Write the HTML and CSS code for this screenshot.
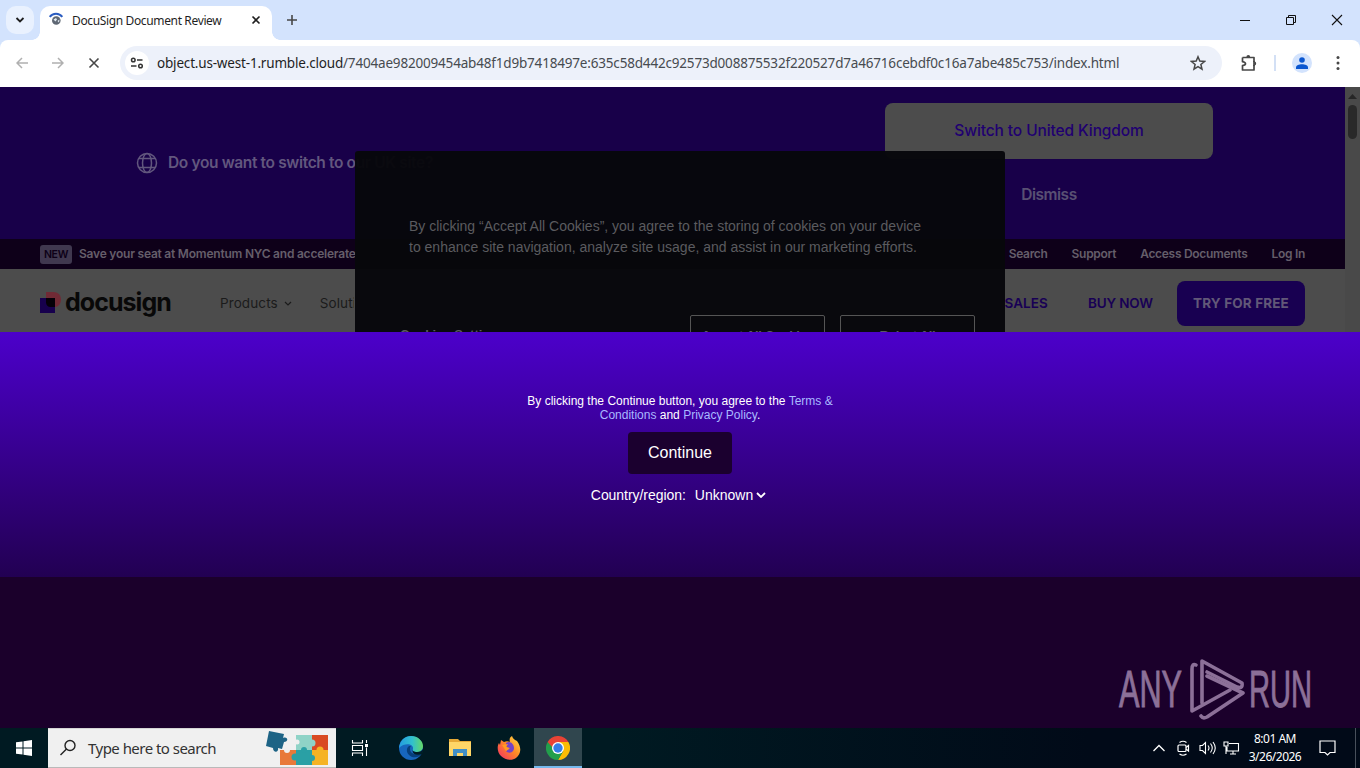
FILE: index.html
```html
<!DOCTYPE html>
<html lang="en">
<head>
  <meta charset="UTF-8">
  <meta name="viewport" content="width=device-width, initial-scale=1.0">
  <title>DocuSign Document Review</title>
  <link rel="stylesheet" href="styles.css">
</head>
<body>
  <!-- Tab strip -->
  <div class="tab-strip">
    <button class="tab-search"><svg width="10" height="10" viewBox="0 0 10 10"><path d="M1.500 3 5 6.500 8.500 3" fill="none" stroke="#1f1f1f" stroke-width="1.800"/></svg></button>
    <div class="tab">
      <svg class="favicon" width="16" height="16" viewBox="0 0 16 16">
        <circle cx="8.300" cy="8.500" r="4.300" fill="#5f6874"/>
        <path d="M5.500 7.500 8 6l1 1.500-1.500 2zM9.500 9l2-1.500-.5 3z" fill="#e4ecf4"/>
        <path d="M1.700 4.800C4.800.6 11.200.6 14.300 4.800" fill="none" stroke="#2a5cc0" stroke-width="2"/>
      </svg>
      <span class="tab-title">DocuSign Document Review</span>
      <svg class="tab-close" width="10" height="10" viewBox="0 0 10 10"><path d="M1.500 1.500l7 7M8.500 1.500l-7 7" stroke="#1f1f1f" stroke-width="1.600"/></svg>
    </div>
    <svg class="new-tab" width="12" height="12" viewBox="0 0 12 12"><path d="M6 1v10M1 6h10" stroke="#474747" stroke-width="1.600"/></svg>
    <div class="window-buttons">
      <svg width="12" height="12" viewBox="0 0 12 12"><path d="M1 6.500h10" stroke="#111"/></svg>
      <svg width="12" height="12" viewBox="0 0 12 12"><path d="M1.500 3.500h7v7h-7zM3.500 3.500v-2h7v7h-2" fill="none" stroke="#111"/></svg>
      <svg width="12" height="12" viewBox="0 0 12 12"><path d="M1 1l10 10M11 1 1 11" stroke="#111" stroke-width="1.100"/></svg>
    </div>
  </div>

  <!-- Toolbar -->
  <div class="toolbar">
    <svg class="nav-icon" width="12" height="12" viewBox="0 0 12 12"><path d="M12 6H1.500M6 1 1 6l5 5" fill="none" stroke="#b0b0b0" stroke-width="1.500"/></svg>
    <svg class="nav-icon" width="12" height="12" viewBox="0 0 12 12"><path d="M0 6h10.500M6 1l5 5-5 5" fill="none" stroke="#b0b0b0" stroke-width="1.500"/></svg>
    <svg class="nav-icon" width="12" height="12" viewBox="0 0 12 12"><path d="M1.500 1.500l9 9M10.500 1.500l-9 9" stroke="#474747" stroke-width="1.600"/></svg>
    <div class="address-bar">
      <span class="site-info"><svg width="14" height="12" viewBox="0 0 14 12"><g fill="none" stroke="#333" stroke-width="1.500"><circle cx="3.300" cy="3" r="1.800"/><path d="M7 3h5.500M1 9h5.500"/><circle cx="10.500" cy="9" r="1.800"/></g></svg></span>
      <span class="url"><span class="host">object.us-west-1.rumble.cloud</span>/7404ae982009454ab48f1d9b7418497e:635c58d442c92573d008875532f220527d7a46716cebdf0c16a7abe485c753/index.html</span>
      <svg class="star" width="16" height="16" viewBox="0 0 16 16"><path d="M8 1.800l1.800 4.300 4.700.4-3.600 3 1.100 4.600L8 11.700l-4 2.400 1.100-4.600-3.600-3 4.700-.4z" fill="none" stroke="#474747" stroke-width="1.500"/></svg>
    </div>
    <svg class="puzzle" width="18" height="18" viewBox="0 0 18 18"><path d="M2.500 3.500h11.500v4.500M14 11v5H2.500v-4.300q3-.7 3-2t-3-2V3.500" fill="none" stroke="#474747" stroke-width="1.700" stroke-linejoin="round"/><path d="M6.400 3a1.900 1.900 0 0 1 3.800 0zM14.300 7.600a1.900 1.900 0 0 1 0 3.800z" fill="#474747"/><path d="M14 7v5" stroke="#474747" stroke-width="1.700"/></svg>
    <span class="divider"></span>
    <span class="avatar"><svg width="14" height="14" viewBox="0 0 14 14"><circle cx="7" cy="4" r="2.800" fill="#0b57d0"/><path d="M1 13v-1.500C1 9.500 4 8.300 7 8.300s6 1.200 6 3.200V13z" fill="#0b57d0"/></svg></span>
    <svg class="menu-dots" width="4" height="16" viewBox="0 0 4 16"><g fill="#474747"><circle cx="2" cy="2.500" r="1.500"/><circle cx="2" cy="8" r="1.500"/><circle cx="2" cy="13.500" r="1.500"/></g></svg>
  </div>

  <!-- Page -->
  <div class="page">
    <div class="site">
      <div class="site-content">
        <div class="region-banner">
          <div class="region-question">
            <svg width="22" height="22" viewBox="0 0 22 22"><g fill="none" stroke="#62577e" stroke-width="1.500"><circle cx="11" cy="11" r="9.500"/><ellipse cx="11" cy="11" rx="4.500" ry="9.500"/><path d="M3 6.500h16M3 15.500h16"/></g></svg>
            <span class="question">Do you want to switch to our UK site?</span>
          </div>
          <div class="region-actions">
            <button class="switch"><span>Switch to United Kingdom</span></button>
            <span class="dismiss">Dismiss</span>
          </div>
        </div>
        <div class="promo-bar">
          <span class="new-badge">NEW</span>
          <span class="promo">Save your seat at Momentum NYC and accelerate</span>
          <span class="link search-link">Search</span>
          <span class="link support-link">Support</span>
          <span class="link docs-link">Access Documents</span>
          <span class="link login-link">Log In</span>
        </div>
        <div class="main-nav">
          <svg class="logo-mark" width="22" height="22" viewBox="0 0 22 22"><path d="M6 0h7c5 0 8 3 8 7.500S18 15 15 15H6z" fill="#702a35"/><path d="M0 6h15v15H0z" fill="#17004d"/><path d="M6 6h9v9h-4.500C8 15 6 13 6 10.500z" fill="#050008"/></svg>
          <span class="logo-text">docusign</span>
          <span class="nav-item products">Products</span>
          <svg class="caret" width="8" height="6" viewBox="0 0 8 6"><path d="M1 1l3 3 3-3" fill="none" stroke="#1b1b1b" stroke-width="1.200"/></svg>
          <span class="nav-item solutions">Solutions</span>
          <span class="cta sales">SALES</span>
          <span class="cta buy">BUY NOW</span>
          <span class="try"><span>TRY FOR FREE</span></span>
        </div>
      </div>
      <div class="scrollbar">
        <svg width="9" height="5" viewBox="0 0 9 5"><path d="M0 5 4.500 0 9 5z" fill="#262626"/></svg>
        <span class="thumb"></span>
      </div>
      <!-- Cookie dialog over the site header -->
      <div class="cookie-dialog">
        <p><span class="line-one">By clicking “Accept All Cookies”, you agree to the storing of cookies on your device</span><br><span class="line-two">to enhance site navigation, analyze site usage, and assist in our marketing efforts.</span></p>
        <div class="cookie-buttons">
          <span class="settings">Cookies Settings</span>
          <span class="outline-button">Accept All Cookies</span>
          <span class="outline-button">Reject All</span>
        </div>
      </div>
    </div>

    <div class="consent">
      <p class="terms"><span class="terms-one">By clicking the Continue button, you agree to the <a>Terms &amp;</a></span><br><span class="terms-two"><a>Conditions</a> and <a>Privacy Policy</a>.</span></p>
      <button class="continue">Continue</button>
      <div class="country"><span class="country-label">Country/region:</span><span class="country-value">Unknown</span><svg width="10" height="6" viewBox="0 0 10 6"><path d="M1 1l4 4 4-4" fill="none" stroke="#fff" stroke-width="1.800"/></svg></div>
    </div>

    <!-- Watermark -->
    <svg class="watermark" width="194" height="64" viewBox="0 0 194 64">
      <g class="watermark-text">
        <text x="1" y="50" textLength="63" lengthAdjust="spacingAndGlyphs">ANY</text>
        <text x="131" y="50" textLength="63" lengthAdjust="spacingAndGlyphs">RUN</text>
      </g>
      <g fill="none" stroke="#8c7098" stroke-width="3.600" stroke-linejoin="round" stroke-linecap="round">
        <path d="M78 8q-4-2-4 4v42l38-21"/>
        <path d="M84 46V4l40 22q1 6-5 4L89 15"/>
        <path d="M83 59q2 3 6 1l36-24-36-17"/>
      </g>
    </svg>
  </div>

  <!-- Taskbar -->
  <div class="taskbar">
    <div class="start"><svg width="16" height="16" viewBox="0 0 16 16"><path d="M0 2.300 6.500 1.400v6.100H0zM7.500 1.200 16 0v7.500H7.500zM0 8.500h6.500v6.100L0 13.700zM7.500 8.500H16V16l-8.500-1.200z" fill="#fff"/></svg></div>
    <div class="search-box">
      <svg class="magnifier" width="18" height="18" viewBox="0 0 18 18"><g fill="none" stroke="#222" stroke-width="1.400"><circle cx="11" cy="6.500" r="5"/><path d="M7.500 10 1.500 16"/></g></svg>
      <span class="search-text">Type here to search</span>
      <svg class="puzzle-art" width="64" height="36" viewBox="0 0 64 36">
        <path d="M14 20h16v15H14z" fill="#e8793a"/>
        <path d="M30 5h16v15H30z" fill="#8fd3c7"/>
        <path d="M46 5h16v15H46z" fill="#d94a22"/>
        <path d="M30 20h16v15H30z" fill="#2aa0a5"/>
        <path d="M46 20h16v15H46z" fill="#f5b324"/>
        <circle cx="46" cy="13" r="3.500" fill="#8fd3c7"/><circle cx="29" cy="27" r="3.500" fill="#2aa0a5"/>
        <circle cx="54" cy="20" r="3.500" fill="#f5b324"/><circle cx="38" cy="20" r="3" fill="#2aa0a5"/><circle cx="46" cy="28" r="3" fill="#2aa0a5"/><circle cx="31" cy="12" r="2.500" fill="#efefef"/><circle cx="21" cy="20" r="3" fill="#efefef"/>
        <path d="M3 1l15 3-1 4c5-2 6 4 1 4l-2 7-4-1c1 5-5 5-5 0l-7-2z" fill="#1d6385"/>
      </svg>
    </div>
    <div class="app"><svg width="18" height="18" viewBox="0 0 18 18"><path d="M1.500 1v3h10V1M1.500 17v-3h10v3M1.500 6.500h10v5h-10zM15.500 1v3M15.500 8.500V17" fill="none" stroke="#fff" stroke-width="1.100"/><path d="M14 5h3v3h-3z" fill="#fff"/></svg></div>
    <div class="app wide"><svg width="24" height="24" viewBox="0 0 24 24">
      <defs><linearGradient id="edge" x1="0" x2="1"><stop offset="0" stop-color="#249be0"/><stop offset=".55" stop-color="#31c0ce"/><stop offset="1" stop-color="#65d867"/></linearGradient></defs>
      <circle cx="12" cy="12" r="12" fill="#1766bd"/>
      <path d="M0 12C1 4 6 0 12 0c7 0 12 5 12 10 0 4-3 6-6 6-3 0-5-1-4-3 1-5-8-7-14-1z" fill="url(#edge)"/>
      <path d="M10 10c-4 3-2 9 3 11 4 1 8 0 10-4-5 3-12 1-12-4 0-1 0-2 1-3z" fill="#073f7b"/>
      <path d="M14 13c-1 2 1 3 4 3 3 0 5-1 6-3 0 2 0 4-1 5-5 2-11 0-9-5z" fill="#001c26"/>
    </svg></div>
    <div class="app wide"><svg width="22" height="20" viewBox="0 0 22 20"><path d="M0 1h9l2 2h11v15H0z" fill="#e7a936"/><path d="M0 4h22v14H0z" fill="#ffd667"/><path d="M4 18v-7h14v7h-4v-3H8v3z" fill="#428fc5"/></svg></div>
    <div class="app wide"><svg width="24" height="24" viewBox="0 0 24 24">
      <defs><linearGradient id="fox" x1="1" y1="0" x2="0" y2="1"><stop offset="0" stop-color="#ffe34a"/><stop offset=".45" stop-color="#ff8b25"/><stop offset="1" stop-color="#f32968"/></linearGradient></defs>
      <path d="M4 4l3 2c2-1 4-1 6 0-1-3 0-5 2-6 1 3 3 4 5 5 5 7 4 13-1 17-4 3-11 2-15-2-4-4-4-10-2-13l1 2z" fill="url(#fox)"/>
      <path d="M9 7c4-3 8 1 8 5 0 5-6 6-8 3l3-2-3-3z" fill="#7543c5"/>
      <path d="M5 9l6-1-2 3 4 1-4 3z" fill="#ff9b20"/>
    </svg></div>
    <div class="app wide active"><svg width="24" height="24" viewBox="0 0 24 24"><path d="M12 6h10.400A12 12 0 0 1 12 24l5.200-9z" fill="#fbbc04"/><path d="M12 12l5.200 3L12 24A12 12 0 0 1 1.600 6z" fill="#229f4b"/><path d="M1.600 6A12 12 0 0 1 22.400 6H12l-5 6z" fill="#e94335"/><circle cx="12" cy="12" r="6" fill="#fff"/><circle cx="12" cy="12" r="4.700" fill="#347ee8"/></svg></div>
    <div class="tray">
      <svg width="12" height="8" viewBox="0 0 12 8"><path d="M.5 7 6 1.500 11.500 7" fill="none" stroke="#fff" stroke-width="1.300"/></svg>
      <svg class="meet" width="14" height="16" viewBox="0 0 14 16"><g fill="none" stroke="#fff" stroke-width="1.200"><rect x="1" y="5" width="8" height="6.500" rx="1"/><path d="M9 7.500 11.500 5.500v5.500L9 9M2.500 2.500Q6 0 9.500 2.500M2.500 14Q6 16.500 9.500 14"/></g></svg>
      <svg class="speaker" width="18" height="14" viewBox="0 0 18 14"><g fill="none" stroke="#fff" stroke-width="1.100"><path d="M1 4.500h2.500L6.500 1.500v11l-3-3H1zM9 4.500q2 2.500 0 5M11.500 2.500q3.500 4.500 0 9M14 1q4.500 6 0 12"/></g></svg>
      <svg class="network" width="17" height="14" viewBox="0 0 17 14"><path d="M6 2.500h9.500v7.500H4V6M1 1h4v4H1zM3 5v8M10 10v3M7 13h6" fill="none" stroke="#fff" stroke-width="1.100"/></svg>
      <div class="clock"><span class="time">8:01 AM</span><span class="date">3/26/2026</span></div>
      <svg class="notice" width="17" height="16" viewBox="0 0 17 16"><path d="M1 1h15v11.500h-5L8.500 15 6 12.500H1z" fill="none" stroke="#fff" stroke-width="1.200"/></svg>
    </div>
  </div>
</body>
</html>
```
FILE: styles.css
```css
* {
  box-sizing: border-box;
}
body {
  margin: 0;
  width: 1360px;
  height: 768px;
  overflow: hidden;
  display: flex;
  flex-direction: column;
  font-family: "Liberation Sans", Arial, sans-serif;
  background: linear-gradient(#d3e3fd 87px, #1b002b 87px);
}
svg {
  display: block;
  flex-shrink: 0;
}
span {
  white-space: nowrap;
}
button {
  border: 0;
  padding: 0;
  font-family: inherit;
}

/* Tab strip */
.tab-strip {
  height: 40px;
  flex-shrink: 0;
  display: flex;
  align-items: center;
}
.tab-search {
  width: 28px;
  height: 28px;
  margin-left: 6px;
  border-radius: 10px;
  background-color: #e9f1fe;
  display: flex;
  align-items: center;
  justify-content: center;
}
.tab {
  position: relative;
  align-self: flex-end;
  width: 232px;
  height: 34px;
  margin-left: 6px;
  padding: 0 11px 6px 8px;
  display: flex;
  align-items: center;
  background-color: #fff;
  border-radius: 10px 10px 0 0;
}
/* curved feet of the tab */
.tab::before,
.tab::after {
  content: "";
  position: absolute;
  bottom: 0;
  width: 8px;
  height: 8px;
}
.tab::before {
  left: -8px;
  background: radial-gradient(circle at 0 0, transparent 7.500px, #fff 8px);
}
.tab::after {
  right: -8px;
  background: radial-gradient(circle at 100% 0, transparent 7.500px, #fff 8px);
}
.favicon {
  margin-top: -1px;
}
.tab-title {
  width: 151px;
  margin-left: 8px;
  font: 12px "Noto Sans", sans-serif;
  letter-spacing: -0.36px;
  color: #1f1f1f;
}
.tab-close {
  margin-left: auto;
}
.new-tab {
  margin-left: 14px;
}
.window-buttons {
  display: flex;
  gap: 34px;
  margin-left: auto;
  margin-right: 17px;
}

/* Toolbar */
.toolbar {
  height: 47px;
  flex-shrink: 0;
  display: flex;
  align-items: center;
  padding: 0 20px 1px 16px;
  background-color: #fff;
  border-radius: 8px 8px 0 0;
}
.nav-icon {
  margin-right: 24px;
}
.address-bar {
  width: 1102px;
  height: 34px;
  margin-left: -4px;
  display: flex;
  align-items: center;
  padding: 0 16px 0 5px;
  border-radius: 17px;
  background-color: #edf1fa;
}
.site-info {
  width: 24px;
  height: 24px;
  border-radius: 50%;
  display: flex;
  align-items: center;
  justify-content: center;
  background-color: #fff;
}
.url {
  margin-left: 8px;
  font: 13.500px "Noto Sans", sans-serif;
  letter-spacing: -0.182px;
  color: #474b50;
}
.host {
  color: #1f1f1f;
}
.star {
  margin-left: auto;
}
.puzzle {
  margin-left: 18px;
}
.divider {
  width: 2px;
  height: 16px;
  margin-left: 16px;
  background-color: #d3e0f5;
}
.avatar {
  width: 20px;
  height: 20px;
  margin-left: 16px;
  border-radius: 50%;
  display: flex;
  align-items: center;
  justify-content: center;
  background-color: #d3e3fd;
}
.menu-dots {
  margin-left: auto;
}

/* Page */
.page {
  position: relative;
  height: 641px;
  flex-shrink: 0;
}
.site {
  position: relative;
  height: 245px;
  display: flex;
  overflow: hidden;
  font-family: Inter, sans-serif;
}
.site-content {
  width: 1345px;
}
.region-banner {
  height: 152px;
  display: flex;
  justify-content: space-between;
  padding: 16px 132px 0 136px;
  background-color: #180049;
}
.region-question {
  height: 120px;
  display: flex;
  align-items: center;
  gap: 10px;
}
.question {
  margin-top: -2px;
  font-size: 15.500px;
  font-weight: 600;
  letter-spacing: -0.36px;
  color: #62577e;
}
.region-actions {
  width: 328px;
  text-align: center;
}
.switch {
  width: 328px;
  height: 56px;
  padding-bottom: 2px;
  border-radius: 8px;
  background-color: #4c4c4c;
  color: #200071;
  font-size: 15.500px;
  font-weight: 500;
  letter-spacing: -0.1px;
}
.dismiss {
  display: block;
  margin-top: 26px;
  line-height: 20px;
  font-size: 15.500px;
  font-weight: 600;
  letter-spacing: -0.5px;
  color: #595073;
}
.promo-bar {
  height: 30px;
  display: flex;
  align-items: center;
  padding: 0 40px 1px;
  background-color: #0e0019;
  color: #655e6a;
  font-size: 12px;
  font-weight: 600;
  letter-spacing: -0.3px;
}
.new-badge {
  width: 32px;
  height: 19px;
  margin-top: 1px;
  border-radius: 3px;
  text-align: center;
  font-size: 10.500px;
  line-height: 19px;
  font-weight: 600;
  background-color: #40384f;
  color: #0d0017;
}
.promo {
  width: 277px;
  margin-left: 7px;
  letter-spacing: -0.22px;
}
.search-link {
  margin-left: auto;
}
.link + .link {
  margin-left: 24px;
}
.main-nav {
  height: 68px;
  display: flex;
  align-items: center;
  padding: 0 40px;
  background-color: #4c4c4c;
  color: #1b1b1b;
}
.logo-text {
  width: 108px;
  margin-left: 3px;
  margin-top: -3px;
  font-size: 25px;
  font-weight: 700;
  letter-spacing: -0.95px;
  color: #080808;
}
.products {
  margin-left: 47px;
}
.nav-item {
  font-size: 13.500px;
  letter-spacing: 0.1px;
}
.caret {
  margin: 2px 0 0 6px;
}
.solutions {
  width: 34px;
  margin-left: 28px;
  overflow: hidden;
}
.cta {
  font-size: 13.500px;
  font-weight: 600;
  letter-spacing: -0.15px;
  color: #180055;
}
.sales {
  margin-left: auto;
  letter-spacing: 0.1px;
}
.buy {
  margin: 0 24px 0 40px;
}
.try {
  width: 128px;
  height: 45px;
  border-radius: 8px;
  text-align: center;
  line-height: 45px;
  font-size: 13.500px;
  font-weight: 700;
  letter-spacing: 0.15px;
  background-color: #180051;
  color: #625878;
}
.scrollbar {
  width: 15px;
  padding-top: 7px;
  display: flex;
  flex-direction: column;
  align-items: center;
  background-color: #494949;
}
.thumb {
  width: 9px;
  height: 34px;
  margin-top: 6px;
  border-radius: 5px;
  background-color: #292929;
}
.cookie-dialog {
  position: absolute;
  left: 355px;
  top: 64px;
  width: 650px;
  height: 230px;
  padding: 65px 30px 0 54px;
  border-radius: 3px;
  background-color: rgba(7, 7, 11, 0.97);
  color: #5b5b5f;
  font-family: "Liberation Sans", Arial, sans-serif;
}
.cookie-dialog p {
  margin: 0;
  font-size: 14px;
  line-height: 21px;
}
.cookie-buttons {
  display: flex;
  gap: 15px;
  margin-top: 57px;
}
.settings {
  margin: 12px auto 0 -9px;
  font-size: 13px;
  font-weight: bold;
}
.outline-button {
  width: 135px;
  height: 40px;
  padding-top: 12px;
  border: 1px solid #555;
  border-radius: 2px;
  text-align: center;
  font-size: 13px;
  font-weight: bold;
  letter-spacing: -0.3px;
  line-height: 16px;
}

/* Consent panel */
.consent {
  height: 245px;
  padding-top: 62px;
  display: flex;
  flex-direction: column;
  align-items: center;
  background: linear-gradient(#4c00cb, #220052);
  color: #fff;
}
.terms {
  margin: 0;
  text-align: center;
  font-size: 12px;
  line-height: 14px;
}
.terms a {
  color: #a9b9ff;
}
.continue {
  width: 104px;
  height: 42px;
  margin-top: 10px;
  border-radius: 4px;
  background-color: #1b002f;
  color: #fff;
  font-size: 16px;
}
.country {
  display: flex;
  align-items: center;
  margin-top: 13px;
  margin-right: 3px;
  font-size: 14px;
}
.country-label {
  letter-spacing: -0.05px;
}
.country-value {
  margin: 0 3px 0 9px;
}
.watermark {
  position: absolute;
  left: 1118px;
  top: 570px;
}
.watermark-text {
  font-family: "Liberation Sans Narrow", "Liberation Sans", sans-serif;
  font-size: 52px;
  fill: #8c7098;
  stroke: #8c7098;
  stroke-width: 1px;
}

/* Taskbar */
.taskbar {
  height: 40px;
  flex-shrink: 0;
  display: flex;
  background: linear-gradient(90deg, #001a22 45%, #010a18 80%);
  color: #fff;
}
.start {
  width: 48px;
  display: flex;
  align-items: center;
  justify-content: center;
}
.search-box {
  width: 288px;
  display: flex;
  align-items: center;
  padding: 0 6px 0 11px;
  border-bottom: 1px solid #b9b9b9;
  border-top: 1px solid #d5d5d5;
  background-color: #f0f0f0;
}
.search-text {
  margin-left: 11px;
  font: 15px "Noto Sans", sans-serif;
  letter-spacing: -0.53px;
  color: #333;
}
.puzzle-art {
  margin-left: auto;
}
.app {
  width: 48px;
  display: flex;
  align-items: center;
  justify-content: center;
}
.wide {
  width: 49px;
  padding-left: 1px;
}
.app:nth-child(4) {
  margin-left: 2px;
}
.active {
  width: 48px;
  margin-left: 1px;
  padding: 2px 0 0;
  background-color: #30464e;
  border-bottom: 2px solid #76b9ed;
}
.tray {
  display: flex;
  align-items: center;
  margin-left: auto;
  width: 203px;
  border-right: 1px solid #48505b;
  margin-right: 4px;
}
.meet {
  margin-left: 12px;
}
.speaker {
  margin-left: 8px;
}
.network {
  margin-left: 6px;
}
.clock {
  width: 62px;
  margin-left: 4px;
  display: flex;
  flex-direction: column;
  align-items: center;
  font: 12px/18px "Noto Sans", sans-serif;
  letter-spacing: -0.5px;
}
.notice {
  margin-left: 13px;
}
```
